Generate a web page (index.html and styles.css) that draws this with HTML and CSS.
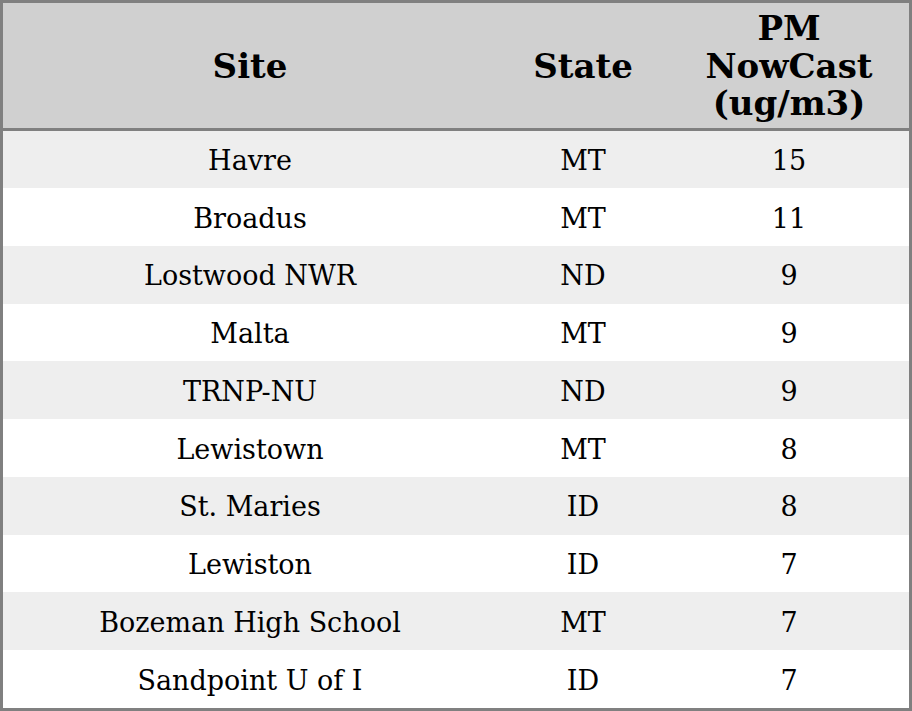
FILE: index.html
```html
<!DOCTYPE html>
<html>
<head>
<meta charset="utf-8">
<link rel="stylesheet" href="styles.css">
</head>
<body>
<table class="aq">
  <thead>
    <tr><th class="c-site">Site</th><th class="c-state">State</th><th class="c-pm">PM NowCast (ug/m3)</th></tr>
  </thead>
  <tbody>
    <tr><td>Havre</td><td>MT</td><td>15</td></tr>
    <tr><td>Broadus</td><td>MT</td><td>11</td></tr>
    <tr><td>Lostwood NWR</td><td>ND</td><td>9</td></tr>
    <tr><td>Malta</td><td>MT</td><td>9</td></tr>
    <tr><td>TRNP-NU</td><td>ND</td><td>9</td></tr>
    <tr><td>Lewistown</td><td>MT</td><td>8</td></tr>
    <tr><td>St. Maries</td><td>ID</td><td>8</td></tr>
    <tr><td>Lewiston</td><td>ID</td><td>7</td></tr>
    <tr><td>Bozeman High School</td><td>MT</td><td>7</td></tr>
    <tr><td>Sandpoint U of I</td><td>ID</td><td>7</td></tr>
  </tbody>
</table>
</body>
</html>
```
FILE: styles.css
```css
html, body {
  margin: 0;
  padding: 0;
  background: #ffffff;
}
.aq {
  width: 912px;
  height: 711px;
  border-collapse: collapse;
  border: 3px solid #808080;
  font-family: "DejaVu Serif", serif;
  color: #000000;
  table-layout: fixed;
}
.aq th {
  background: #d0d0d0;
  font-size: 34px;
  font-weight: bold;
  line-height: 37.5px;
  padding: 7px 0 5px;
  text-align: center;
  border-bottom: 3px solid #808080;
  height: 112px;
}
.c-site { width: 494px; }
.c-state { width: 172px; }
.c-pm { width: auto; }
.aq td {
  font-size: 27px;
  line-height: 30px;
  text-align: center;
  padding: 3px 0 0;
  height: 54.7px;
}
.aq tbody tr:nth-child(odd) td {
  background: #eeeeee;
}
```
